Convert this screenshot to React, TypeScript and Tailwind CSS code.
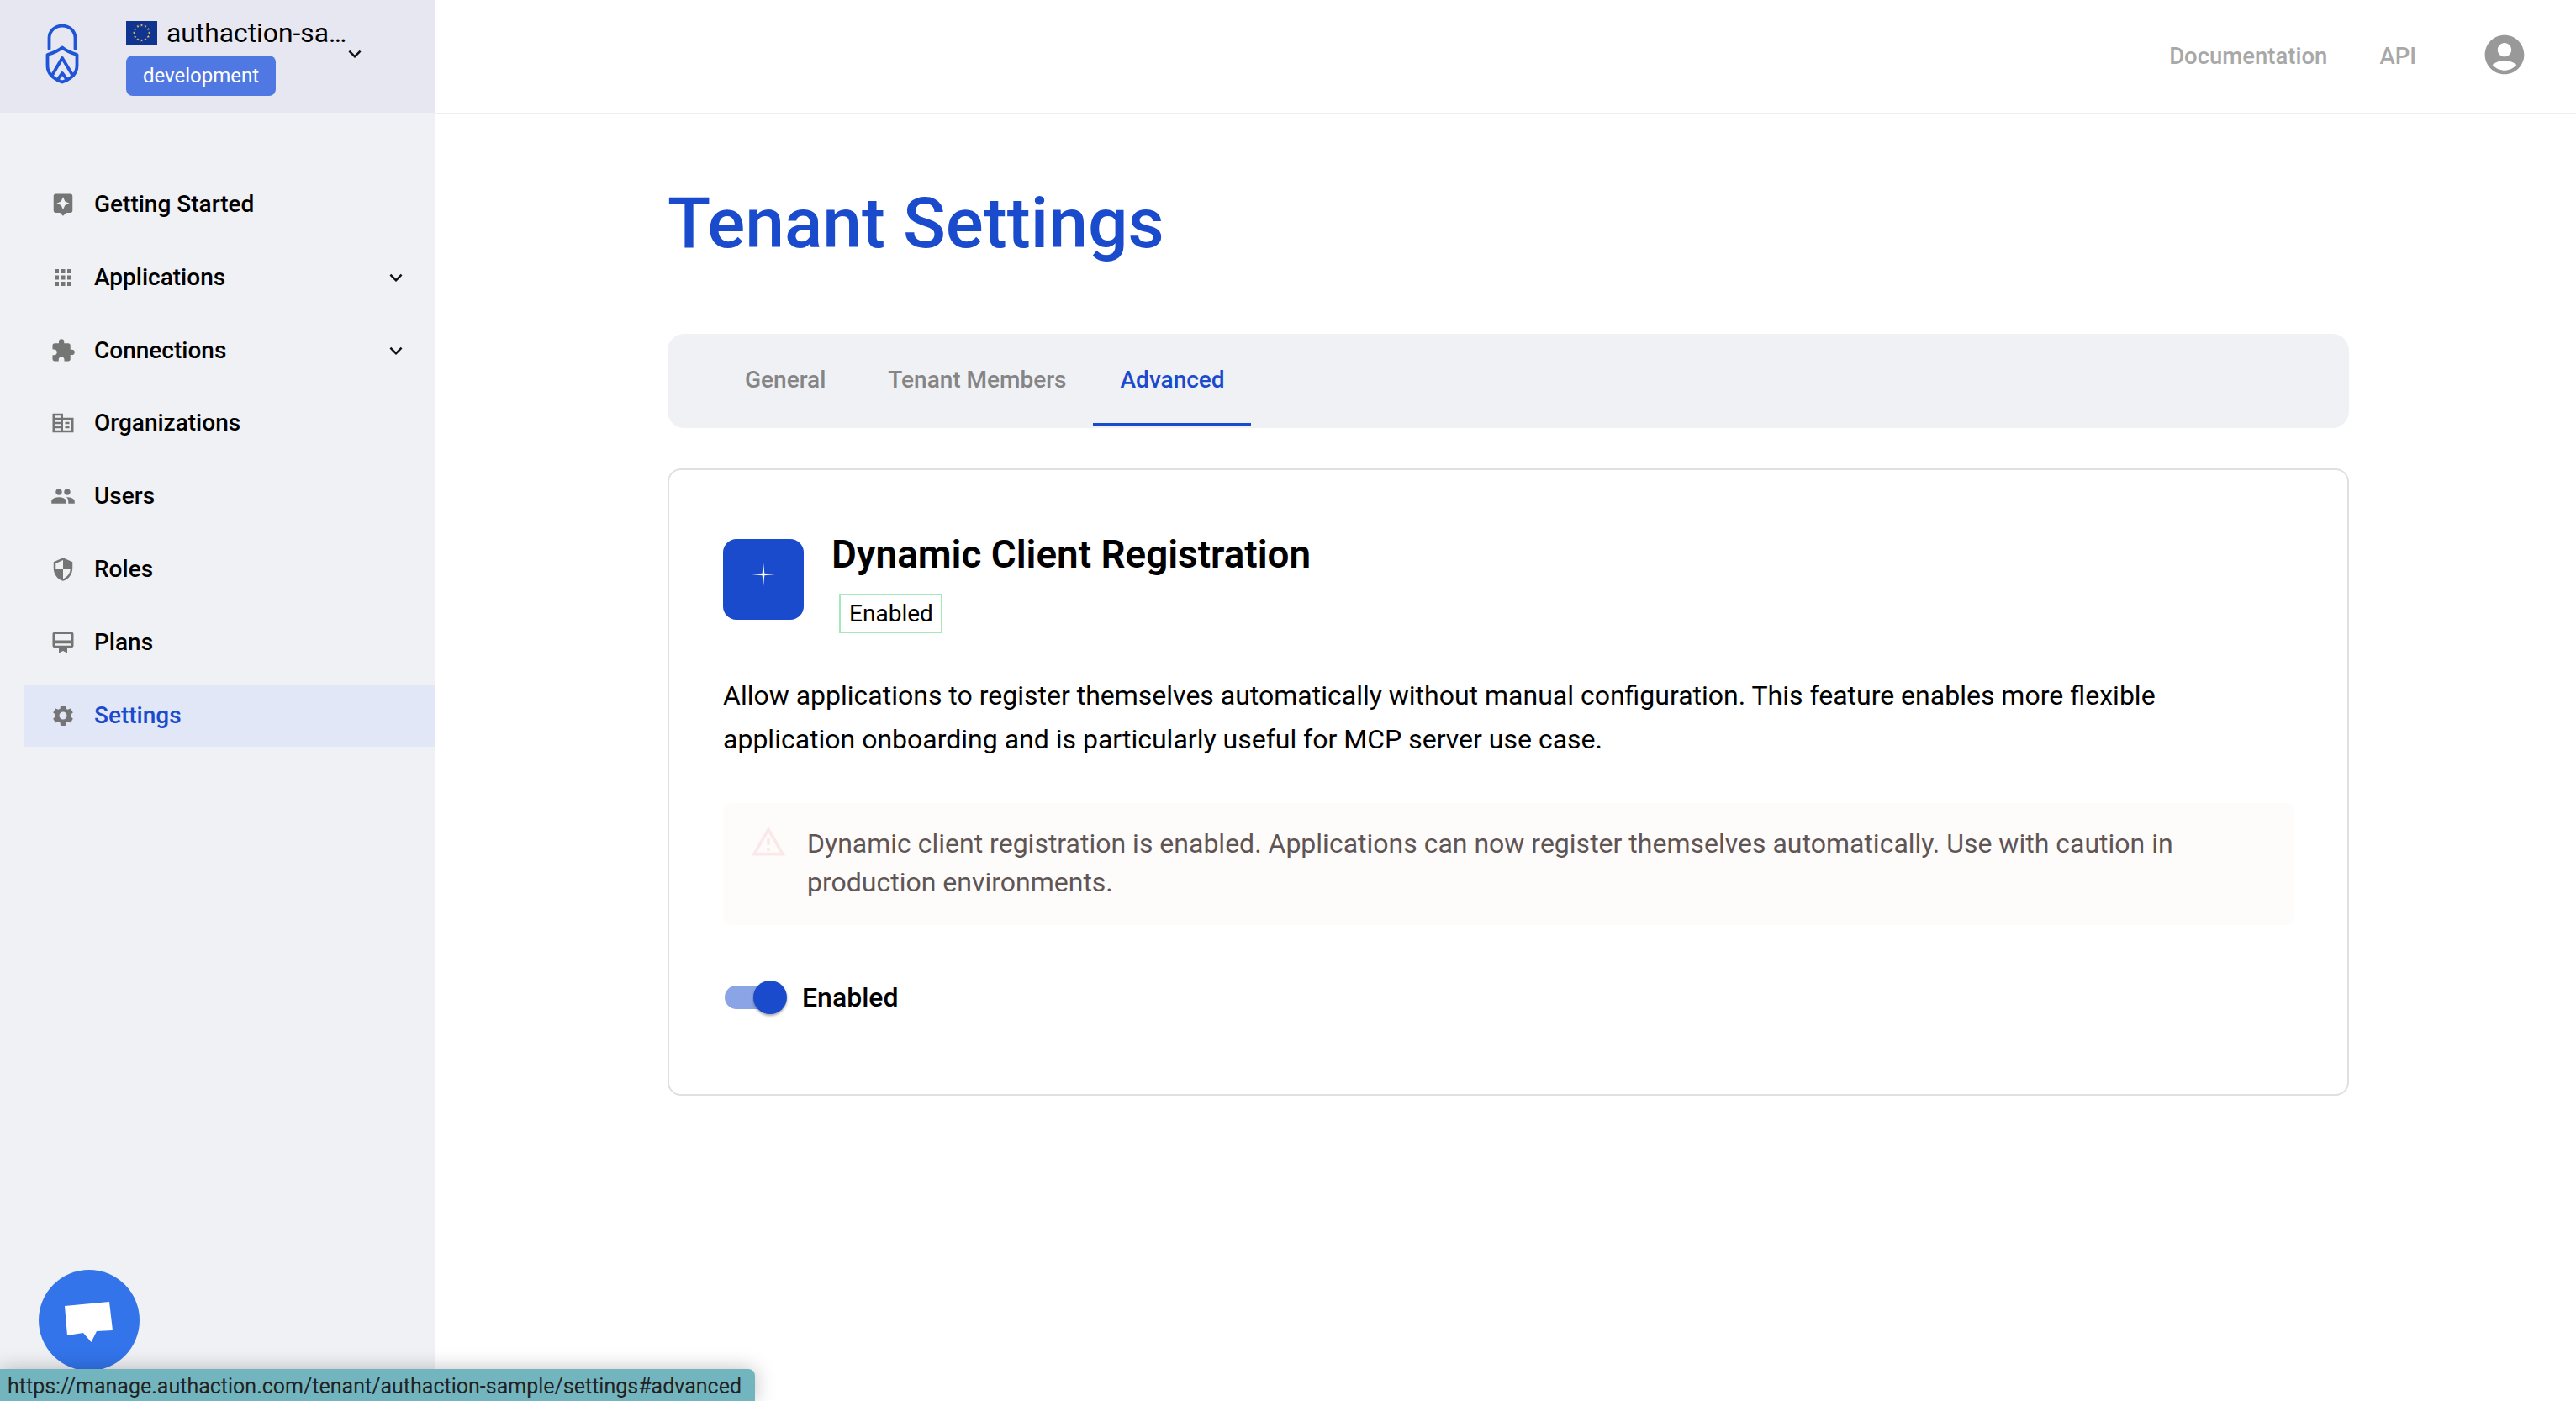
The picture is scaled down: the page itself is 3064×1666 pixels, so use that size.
import React from "react";
import {
  MdAssistant,
  MdApps,
  MdExtension,
  MdCorporateFare,
  MdPeople,
  MdSecurity,
  MdCardMembership,
  MdSettings,
  MdExpandMore,
  MdAccountCircle,
  MdOutlineWarningAmber,
} from "react-icons/md";

const nav = [
  { label: "Getting Started", Icon: MdAssistant },
  { label: "Applications", Icon: MdApps, more: true },
  { label: "Connections", Icon: MdExtension, more: true },
  { label: "Organizations", Icon: MdCorporateFare },
  { label: "Users", Icon: MdPeople },
  { label: "Roles", Icon: MdSecurity },
  { label: "Plans", Icon: MdCardMembership },
  { label: "Settings", Icon: MdSettings, active: true },
];

function Logo() {
  return (
    <svg width="40" height="72" viewBox="54 28 40 72" fill="none" stroke="#1f55d8" strokeWidth="3.800" strokeLinecap="round" strokeLinejoin="round">
      <path d="M58.500 58V45.500c0-8.500 6.500-14.800 15.500-14.800s15.500 6.300 15.500 14.800V58" />
      <path d="M74 56.500C70 60 63 63 56.500 65V78C56.500 88 64 94 74 97.500 84 94 91.500 88 91.500 78V65C85 63 78 60 74 56.500Z" />
      <path d="M61.700 90L74 69l12.700 21" />
      <path d="M68.300 95L74 87l6 8" />
    </svg>
  );
}

function Flag() {
  const stars = Array.from({ length: 12 }, (_, i) => {
    const a = (i * Math.PI) / 6;
    const cx = 18.500 + 9 * Math.sin(a);
    const cy = 14 - 9 * Math.cos(a);
    const pts = Array.from({ length: 10 }, (_, k) => {
      const r = k % 2 === 0 ? 1.800 : 0.700;
      const t = (k * Math.PI) / 5;
      return `${cx + r * Math.sin(t)},${cy - r * Math.cos(t)}`;
    }).join(" ");
    return pts;
  });
  return (
    <svg width="37" height="28" viewBox="0 0 37 28" className="shrink-0">
      <rect width="37" height="28" fill="#0f3591" />
      {stars.map((p, i) => (
        <polygon key={i} points={p} fill="#f2c84b" />
      ))}
    </svg>
  );
}

export default function App() {
  return (
    <div className="relative flex h-[1666px] w-[3064px] overflow-hidden bg-white font-['Roboto',sans-serif] text-black">
      <aside className="flex w-[518px] shrink-0 flex-col bg-[#f0f1f5]">
        <div className="flex h-[134px] items-start bg-[#e6e7f0] pl-[54px]">
          <div className="mt-[28px]">
            <Logo />
          </div>
          <div className="ml-[56px] mt-[25px] flex flex-col items-start">
            <div className="flex h-[28px] items-center gap-[11px]">
              <Flag />
              <span className="text-[31.800px] leading-[28px]">authaction-sa…</span>
            </div>
            <div className="mt-[13px] flex h-[48px] w-[178px] items-center justify-center rounded-[8px] bg-[#4f78e2] text-[24px] text-white">development</div>
          </div>
          <MdExpandMore className="mt-[49px] ml-[-5px] text-[#111]" size={30} />
        </div>
        <nav className="mt-[72px] ml-[28px] flex flex-col gap-[12.800px]">
          {nav.map(({ label, Icon, more, active }) => (
            <div key={label} className={`flex h-[74px] items-center pl-[32px] pr-[32px] text-[28px] font-medium ${active ? "bg-[#e1e7f7] text-[#1a4bcc]" : ""}`}>
              <Icon size={30} className="shrink-0 text-[#757575]" />
              <span className="ml-[22px] flex-1">{label}</span>
              {more && <MdExpandMore size={30} className="text-[#111]" />}
            </div>
          ))}
        </nav>
      </aside>

      <div className="flex flex-1 flex-col">
        <header className="flex h-[136px] shrink-0 items-center justify-end border-b-2 border-[#eeeeee] pr-[57px] text-[27.500px] font-medium text-[#a8a8a8]">
          <span>Documentation</span>
          <span className="ml-[62px]">API</span>
          <MdAccountCircle size={56} className="ml-[77px] mb-[5px] text-[#999999]" />
        </header>

        <main className="ml-[276px] w-[2000px]">
          <h1 className="mt-[80px] text-[84px] font-medium leading-[100px] text-[#1a4bcc]">Tenant Settings</h1>

          <div className="mt-[81px] flex h-[112px] items-stretch rounded-[20px] bg-[#f0f1f5] pl-[60px] pb-[2px] text-[28px] font-medium text-[#858585]">
            <div className="flex items-center border-b-4 border-transparent px-[32px] pt-[4px]">General</div>
            <div className="ml-[10px] flex items-center border-b-4 border-transparent px-[32px] pt-[4px]">Tenant Members</div>
            <div className="ml-[-1px] flex items-center border-b-4 border-[#1a4bcc] pl-[33px] pr-[31px] pt-[4px] text-[#1a4bcc]">Advanced</div>
          </div>

          <section className="mt-[48px] h-[746px] rounded-[16px] border-2 border-[#e0e0e0] px-[64px] pt-[82px]">
            <div className="flex items-start">
              <div className="flex h-[96px] w-[96px] shrink-0 items-center justify-center rounded-[16px] bg-[#1a4bcc] pb-[12px]">
                <svg width="30" height="30" viewBox="0 0 30 30" fill="#fff">
                  <path d="M15 1l1.300 12.700L29 15l-12.700 1.300L15 29l-1.300-12.700L1 15l12.700-1.300z" />
                </svg>
              </div>
              <div className="ml-[33px]">
                <h2 className="mt-[-5px] text-[45.800px] font-semibold leading-[48px]">Dynamic Client Registration</h2>
                <div className="ml-[9px] mt-[22px] flex h-[47px] w-[123px] items-center justify-center border-2 border-[#a5e8bc] pl-[1px] text-[28px]">Enabled</div>
              </div>
            </div>

            <p className="mt-[48px] text-[32px] leading-[52px]">
              Allow applications to register themselves automatically without manual configuration. This feature enables more flexible application onboarding and is particularly useful for MCP server use case.
            </p>

            <div className="mt-[50px] flex h-[145px] w-[1868px] rounded-[8px] bg-[#fefcfb] pl-[32px] pr-[60px] pt-[25px] text-[#5f5555]">
              <MdOutlineWarningAmber size={44} className="mt-[-1px] shrink-0 text-[#fbe8e8]" />
              <p className="ml-[24px] text-[32px] leading-[46px]">
                Dynamic client registration is enabled. Applications can now register themselves automatically. Use with caution in production environments.
              </p>
            </div>

            <div className="mt-[62px] flex items-center">
              <div className="relative ml-[2px] h-[28px] w-[68px] rounded-full bg-[#8ba4e6]">
                <div className="absolute right-[-6px] top-[-6px] h-[40px] w-[40px] rounded-full bg-[#1a4bcc] shadow-[0_2px_3px_rgba(0,0,0,0.35)]" />
              </div>
              <span className="ml-[24px] text-[32px] font-medium">Enabled</span>
            </div>
          </section>
        </main>
      </div>

      <div className="absolute left-[46px] top-[1510px] flex h-[120px] w-[120px] items-center justify-center rounded-full bg-[#3374eb]">
        <svg width="60" height="52" viewBox="0 0 60 52" fill="#fff">
          <path d="M1 9L54 4l4 34-19 1-6.500 13L23 41 4 44z" />
        </svg>
      </div>

      <div className="absolute bottom-0 left-0 flex h-[38px] w-[898px] items-center whitespace-nowrap rounded-tr-[8px] bg-[#72b5bf] pl-[9px] pt-[3px] text-[25px] leading-none text-[#222222] shadow-[0_0_24px_rgba(0,0,0,0.25)]">
        https://manage.authaction.com/tenant/authaction-sample/settings#advanced
      </div>
    </div>
  );
}
